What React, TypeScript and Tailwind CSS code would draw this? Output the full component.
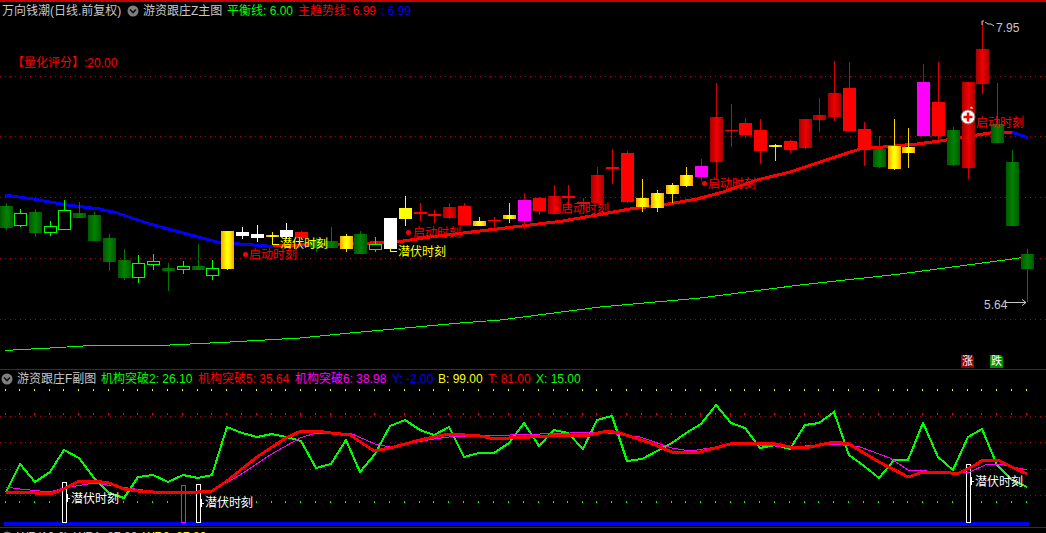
import React from 'react';

type Kind = 'g' | 'h' | 'w' | 'r' | 'd' | 'y' | 'o' | 'm';

// kind, center x, wick top, wick bottom, body top, body bottom
const CANDLES: [Kind, number, number, number, number, number][] = [
  ['g', 6, 203, 230, 206, 228], ['h', 20, 209, 227, 213, 226], ['g', 35, 209, 237, 212, 233],
  ['h', 50, 221, 236, 226, 233], ['h', 64, 200, 230, 210, 230], ['g', 79, 202, 218, 213, 218],
  ['g', 94, 212, 241, 215, 241], ['g', 109, 234, 271, 238, 262], ['g', 124, 249, 280, 260, 278],
  ['h', 138, 255, 283, 263, 278], ['h', 153, 254, 270, 261, 265], ['g', 168, 263, 291, 268, 271],
  ['h', 183, 261, 274, 266, 270], ['g', 198, 244, 270, 266, 270], ['h', 212, 260, 280, 268, 276],
  ['o', 227, 231, 270, 231, 269], ['w', 242, 227, 239, 232, 236], ['w', 257, 225, 242, 234, 238],
  ['o', 272, 232, 244, 235, 237], ['w', 286, 223, 239, 230, 237], ['r', 301, 231, 240, 232, 238],
  ['g', 316, 238, 252, 240, 248], ['g', 331, 227, 248, 241, 248], ['o', 346, 234, 252, 236, 249],
  ['g', 360, 231, 254, 234, 254], ['h', 375, 237, 252, 244, 250], ['w', 390, 218, 249, 218, 249],
  ['y', 405, 196, 226, 208, 219], ['r', 420, 203, 221, 212, 214], ['r', 434, 210, 223, 214, 216],
  ['d', 449, 203, 219, 207, 218], ['r', 464, 203, 225, 206, 225], ['o', 479, 217, 226, 221, 226],
  ['r', 494, 217, 228, 220, 221], ['o', 509, 203, 223, 215, 219], ['m', 524, 193, 229, 200, 221],
  ['r', 539, 197, 215, 198, 211], ['d', 554, 185, 214, 196, 214], ['r', 568, 185, 210, 196, 198],
  ['r', 583, 198, 210, 202, 204], ['d', 597, 167, 203, 175, 203], ['r', 612, 149, 184, 167, 169],
  ['r', 627, 151, 203, 153, 202], ['o', 642, 179, 212, 198, 207], ['o', 657, 190, 212, 193, 208],
  ['o', 672, 183, 203, 185, 194], ['o', 686, 167, 187, 175, 186], ['m', 701, 159, 181, 166, 177],
  ['d', 716, 83, 180, 117, 162], ['r', 731, 104, 147, 130, 131], ['r', 745, 118, 138, 123, 135],
  ['r', 760, 119, 164, 130, 151], ['o', 775, 144, 161, 145, 147], ['r', 790, 140, 153, 141, 150],
  ['d', 805, 119, 149, 119, 148], ['d', 819, 98, 132, 115, 120], ['d', 834, 61, 121, 93, 117],
  ['r', 849, 62, 132, 88, 131], ['r', 864, 122, 166, 129, 148], ['g', 879, 136, 168, 149, 167],
  ['o', 894, 119, 170, 146, 169], ['o', 908, 128, 168, 147, 153], ['m', 923, 64, 136, 82, 136],
  ['r', 938, 62, 140, 102, 136], ['g', 953, 127, 166, 130, 165], ['d', 968, 82, 179, 82, 168],
  ['d', 982, 21, 94, 49, 84], ['g', 997, 83, 143, 124, 143], ['g', 1012, 150, 226, 162, 226],
  ['g', 1027, 249, 302, 254, 269],
];

const BODY_FILL: Record<Kind, string> = {
  g: 'url(#darkGreen)', h: '#000000', w: '#ffffff', r: '#ff0000',
  d: 'url(#darkRed)', y: '#ffff00', o: 'url(#gold)', m: '#ff00ff',
};
const WICK: Record<Kind, string> = {
  g: '#007800', h: '#00ff00', w: '#ffffff', r: '#e00000',
  d: '#d00000', y: '#ffff00', o: '#ffd800', m: '#d00000',
};

const BLUE_LEFT = '5,195 33,199 67,205 100,209 117,213 150,224 183,233 217,242 240,244 267,246 300,246 370,244';
const BLUE_RIGHT = '1012,132 1020,135 1028,138';
const RED_MA = '273,245 300,245 340,244 370,243 397,242 430,237 463,233 497,229 530,225 563,221 597,215 630,209 663,205 697,199 723,192 757,180 790,172 823,161 860,149 917,144 940,141 977,135 990,133 1012,132';
const LONG_MA = '5,351 13,350 50,348 100,345 170,345 230,342 300,338 350,333 460,323 500,320 600,307 700,298 800,285 900,274 960,266 1027,257';

const SUB_GREEN = '6,492 20,464 35,482 50,472 64,450 79,458 94,478 109,493 124,498 138,477 153,475 168,482 183,475 198,478 212,475 227,427 242,433 257,437 272,434 286,437 301,441 316,468 331,464 346,440 360,472 375,454 390,426 405,420 420,430 434,435 449,427 464,457 479,453 494,453 509,443 524,423 539,446 554,430 568,433 583,449 597,420 612,416 627,461 642,459 657,451 672,443 686,433 701,424 716,405 731,423 745,428 760,448 775,445 790,449 805,425 819,423 834,412 849,455 864,466 879,478 894,460 908,460 923,423 938,457 953,470 968,437 982,429 997,465 1012,480 1027,487';
const SUB_RED = '6,492 20,492 35,493 50,494 64,489 79,481 94,481 109,483 124,489 138,491 153,492 198,492 212,491 227,481 242,469 257,457 272,447 286,438 301,431 316,431 331,433 350,435 374,451 390,448 420,440 434,437 449,434 480,436 490,438 509,438 530,437 568,435 590,435 607,431 620,433 650,443 672,452 700,452 730,444 745,443 770,443 790,447 810,447 834,442 849,444 879,462 908,477 923,472 945,472 957,474 975,465 983,460 998,460 1012,467 1027,474';
const SUB_MAGENTA = '6,487 20,489 50,492 64,488 94,483 120,487 150,491 212,491 240,475 270,455 300,438 316,433 350,433 375,444 390,447 434,439 449,437 480,436 600,432 640,437 672,448 690,451 730,445 745,444 790,447 834,444 860,447 890,458 908,470 945,472 970,472 985,465 1000,464 1027,470';

const FONT = "font-['Liberation_Sans','Noto_Sans_CJK_SC',sans-serif]";

function Chevron() {
  return (
    <svg width="12" height="12" viewBox="0 0 12 12" className="shrink-0">
      <circle cx="6" cy="6" r="5.5" fill="#808080" />
      <path d="M3 4.5 L6 7.5 L9 4.5" stroke="#111111" strokeWidth="1.6" fill="none" />
    </svg>
  );
}

function Grid({ lines }: { lines: number[] }) {
  return (
    <>
      {lines.map((y) => (
        <line key={y} x1="0" x2="1046" y1={y + 0.5} y2={y + 0.5} stroke="#b40000" strokeDasharray="1 4" />
      ))}
    </>
  );
}

function Candle({ c }: { c: (typeof CANDLES)[number] }) {
  const [kind, cx, hi, lo, top, bottom] = c;
  const left = cx - 6;
  const hollow = kind === 'h';
  return (
    <g shapeRendering="crispEdges">
      <rect x={cx} y={hi} width="1" height={lo - hi} fill={WICK[kind]} />
      {hollow ? (
        <rect x={left + 0.5} y={top + 0.5} width="12" height={bottom - top - 1} fill="#000000" stroke="#00ff00" />
      ) : (
        <rect x={left} y={top} width="13" height={bottom - top} fill={BODY_FILL[kind]} />
      )}
    </g>
  );
}

function Line({ pts, color, w }: { pts: string; color: string; w: number }) {
  return <polyline points={pts} fill="none" stroke={color} strokeWidth={w} shapeRendering="crispEdges" />;
}

function Tick({ x, y, color }: { x: number; y: number; color: string }) {
  return (
    <path
      d={`M${x} ${y} h4 M${x + 1} ${y - 4} v8`}
      stroke={color}
      strokeWidth="1"
      fill="none"
      shapeRendering="crispEdges"
    />
  );
}

function MainPane() {
  return (
    <div className="relative h-[367px] shrink-0 border-b border-[#a80000]">
      <svg className="absolute inset-0" width="1046" height="366" viewBox="0 3 1046 366">
        <defs>
          <linearGradient id="darkGreen">
            <stop offset="0" stopColor="#005800" />
            <stop offset="0.5" stopColor="#008400" />
            <stop offset="1" stopColor="#005800" />
          </linearGradient>
          <linearGradient id="darkRed">
            <stop offset="0" stopColor="#a80000" />
            <stop offset="0.5" stopColor="#f00000" />
            <stop offset="1" stopColor="#a80000" />
          </linearGradient>
          <linearGradient id="gold">
            <stop offset="0" stopColor="#ffa000" />
            <stop offset="0.4" stopColor="#ffff00" />
            <stop offset="0.6" stopColor="#ffff00" />
            <stop offset="1" stopColor="#ffa000" />
          </linearGradient>
        </defs>
        <Grid lines={[76, 136, 197, 258, 319]} />
        <Line pts={LONG_MA} color="#00ff00" w={1} />
        <Line pts={BLUE_LEFT} color="#0000ff" w={3} />
        <Line pts={RED_MA} color="#ff0000" w={3} />
        <Line pts={BLUE_RIGHT} color="#0000ff" w={3} />
        {CANDLES.map((c) => (
          <Candle key={c[1]} c={c} />
        ))}
        <circle cx="245.5" cy="254.5" r="2.5" fill="#ff0000" />
        <circle cx="408.5" cy="232.5" r="2.5" fill="#ff0000" />
        <circle cx="556.5" cy="208.5" r="2.5" fill="#ff0000" />
        <circle cx="704.5" cy="183.5" r="2.5" fill="#ff0000" />
        <path d="M272 236 v8 h7 M390 248 v3 h7" stroke="#ffff00" fill="none" shapeRendering="crispEdges" />
        {/* high and low markers */}
        <path d="M982 25 v-4 h2 M985 22 l3 2 l3 0 l3 2" stroke="#c8c8c8" fill="none" />
        <path d="M1005 302.5 h21 M1022 299.5 l4 3 l-4 3" stroke="#c8c8c8" fill="none" />
        {/* buy marker */}
        <circle cx="968" cy="117" r="7" fill="#ffffff" stroke="#777777" />
        <path d="M963.5 117 h9 M968 112.5 v9" stroke="#ff0000" strokeWidth="2.4" />
        <path d="M970 108 l2 -1 v2" stroke="#ffffff" fill="none" />
      </svg>

      <div className="relative flex h-[16px] items-center text-[12px] leading-none text-[#c8c8c8]">
        <span className="ml-[2px] w-[125px] shrink-0">万向钱潮(日线.前复权)</span>
        <Chevron />
        <span className="ml-[4px] w-[84px] shrink-0">游资跟庄Z主图</span>
        <span className="w-[71px] shrink-0 text-[#00ff00]">平衡线: 6.00</span>
        <span className="w-[83px] shrink-0 text-[#ff0000]">主趋势线: 6.99</span>
        <span className="text-[#0000ff]">: 6.99</span>
      </div>

      <span className="absolute left-[12px] top-[53px] text-[12px] leading-[14px] text-[#ff0000]">【量化评分】:20.00</span>
      <span className="absolute left-[249px] top-[245px] text-[12px] leading-[14px] text-[#ff0000]">启动时刻</span>
      <span className="absolute left-[413px] top-[223px] text-[12px] leading-[14px] text-[#ff0000]">启动时刻</span>
      <span className="absolute left-[561px] top-[199px] text-[12px] leading-[14px] text-[#ff0000]">启动时刻</span>
      <span className="absolute left-[708px] top-[174px] text-[12px] leading-[14px] text-[#ff0000]">启动时刻</span>
      <span className="absolute left-[976px] top-[113px] text-[12px] leading-[14px] text-[#ff0000]">启动时刻</span>
      <span className="absolute left-[280px] top-[234px] text-[12px] leading-[14px] text-[#ffff00]">潜伏时刻</span>
      <span className="absolute left-[398px] top-[242px] text-[12px] leading-[14px] text-[#ffff00]">潜伏时刻</span>
      <span className="absolute left-[996px] top-[18px] text-[12px] leading-[14px] text-[#c8c8c8]">7.95</span>
      <span className="absolute left-[984px] top-[295px] text-[12px] leading-[14px] text-[#c8c8c8]">5.64</span>
      <span className="absolute left-[961px] top-[352px] flex h-[13px] w-[13px] items-center justify-center bg-[#8c0000] text-[11px] leading-none text-white [clip-path:polygon(0_0,85%_0,100%_15%,100%_100%,0_100%)]">
        涨
      </span>
      <span className="absolute left-[990px] top-[352px] flex h-[13px] w-[13px] items-center justify-center bg-[#008c00] text-[11px] leading-none text-white [clip-path:polygon(0_0,85%_0,100%_15%,100%_100%,0_100%)]">
        跌
      </span>
    </div>
  );
}

function SubPane() {
  return (
    <div className="relative h-[158px] shrink-0 border-b border-[#a80000]">
      <svg className="absolute inset-0" width="1046" height="157" viewBox="0 370 1046 157">
        <Grid lines={[416, 442, 469, 495]} />
        <g shapeRendering="crispEdges">
          {CANDLES.map((c) => (
            <g key={c[1]}>
              <rect x={c[1] - 1} y="389" width="1" height="2" fill="#ffff00" />
              <rect x={c[1] - 1} y="413" width="1" height="2" fill="#ff0000" />
              <rect x={c[1] - 1} y="501" width="1" height="2" fill="#00ff00" />
            </g>
          ))}
          <rect x="4" y="522" width="1025" height="4" fill="#0000ff" />
          <rect x="62.5" y="482.5" width="4" height="40" fill="#000000" stroke="#ffffff" />
          <rect x="181.5" y="485.5" width="4" height="37" fill="#000000" stroke="#ff00ff" />
          <rect x="196.5" y="484.5" width="4" height="38" fill="#000000" stroke="#ffffff" />
          <rect x="966.5" y="464.5" width="4" height="58" fill="#000000" stroke="#ffffff" />
        </g>
        <Line pts={SUB_GREEN} color="#00ff00" w={2} />
        <Line pts={SUB_MAGENTA} color="#ff00ff" w={1} />
        <Line pts={SUB_RED} color="#ff0000" w={3} />
        <Tick x={66} y={498} color="#ffffff" />
        <Tick x={200} y={503} color="#ffffff" />
        <Tick x={970} y={481} color="#ffffff" />
      </svg>

      <div className="relative flex h-[16px] items-center pt-[1px] text-[12px] leading-none">
        <span className="ml-[1px] shrink-0">
          <Chevron />
        </span>
        <span className="ml-[4px] w-[84px] shrink-0 text-[#c8c8c8]">游资跟庄F副图</span>
        <span className="w-[97px] shrink-0 text-[#00ff00]">机构突破2: 26.10</span>
        <span className="w-[97px] shrink-0 text-[#ff0000]">机构突破5: 35.64</span>
        <span className="w-[97px] shrink-0 text-[#ff00ff]">机构突破6: 38.98</span>
        <span className="w-[46px] shrink-0 text-[#0000ff]">Y: -2.00</span>
        <span className="w-[50px] shrink-0 text-[#ffff00]">B: 99.00</span>
        <span className="w-[48px] shrink-0 text-[#ff0000]">T: 81.00</span>
        <span className="text-[#00ff00]">X: 15.00</span>
      </div>

      <span className="absolute left-[71px] top-[122px] text-[12px] leading-[14px] text-white">潜伏时刻</span>
      <span className="absolute left-[205px] top-[126px] text-[12px] leading-[14px] text-white">潜伏时刻</span>
      <span className="absolute left-[975px] top-[105px] text-[12px] leading-[14px] text-white">潜伏时刻</span>
    </div>
  );
}

export default function App() {
  return (
    <div className={`flex h-[533px] w-[1046px] flex-col overflow-hidden bg-black ${FONT}`}>
      <div className="h-[2px] shrink-0 bg-[#c80000]" />
      <div className="h-[1px] shrink-0" />
      <MainPane />
      <SubPane />
      <div className="flex h-[16px] shrink-0 items-center pl-[1px] pt-[2px] text-[12px] leading-none">
        <Chevron />
        <span className="ml-[4px] w-[57px] text-[#c8c8c8]">WR(10,6)</span>
        <span className="w-[69px] text-[#c8c8c8]">WR1: 87.80</span>
        <span className="text-[#ffff00]">WR2: 87.80</span>
      </div>
    </div>
  );
}
